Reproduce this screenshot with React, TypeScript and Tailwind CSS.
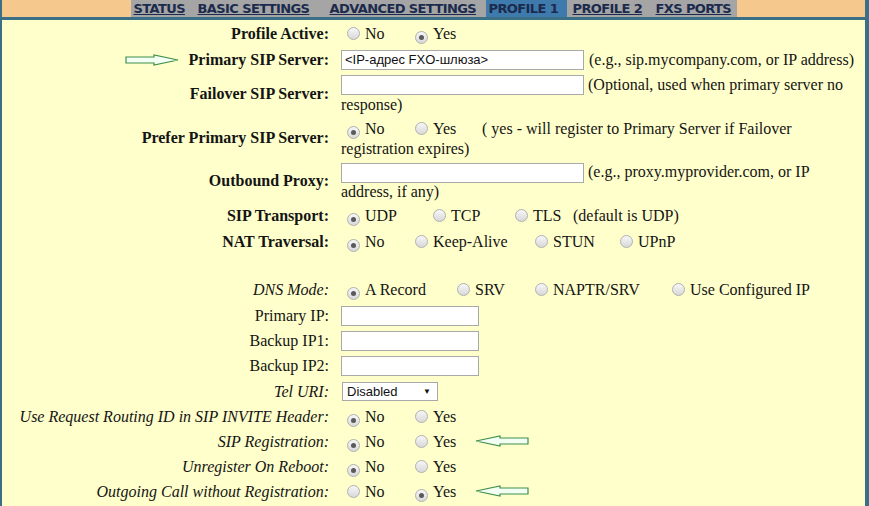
import React from 'react'

const tabs = [
  { label: 'STATUS', w: 'w-[61px] pl-[3px]' },
  { label: 'BASIC SETTINGS', w: 'w-[132px] pl-[6px]' },
  { label: 'ADVANCED SETTINGS', w: 'w-[162px] pl-[6px]' },
  { label: 'PROFILE 1', w: 'w-[81px] pl-[3px]', active: true },
  { label: 'PROFILE 2', w: 'w-[83px] pl-[6px]' },
  { label: 'FXS PORTS', w: 'w-[87px] pl-[6px]' },
]

function Radio({ on }: { on?: boolean }) {
  return (
    <span className="inline-flex items-center justify-center w-[13px] h-[13px] rounded-full border border-[#b0b0b0] bg-linear-to-b from-[#f7f7f7] to-[#d9d9d9] align-[-1px] mr-[5px]">
      {on && <span className="w-[5px] h-[5px] rounded-full bg-[#5a5a5a]" />}
    </span>
  )
}

function Option({ label, on, w }: { label: string; on?: boolean; w?: string }) {
  return (
    <span className={`inline-block whitespace-nowrap ${w ?? ''}`}>
      <Radio on={on} />
      {label}
    </span>
  )
}

function Arrow({ left }: { left?: boolean }) {
  return (
    <svg width="54" height="12" viewBox="0 0 54 12" className={left ? '' : 'rotate-180'}>
      <path
        d="M1 6 L25 1 L25 3 L53 3 L53 9 L25 9 L25 11 Z"
        fill="#f4fff4"
        stroke="#3f8f4a"
        strokeWidth="1.2"
        strokeLinejoin="miter"
      />
    </svg>
  )
}

function Field({ w, value }: { w: string; value?: string }) {
  return (
    <input
      readOnly
      defaultValue={value}
      className={`${w} h-[20px] align-top border border-[#a9a9a9] bg-white px-[3px] text-[13px] text-[#111] font-['Liberation_Sans',Arial,sans-serif] outline-none`}
    />
  )
}

function Row({
  label,
  style = 'bold',
  h = 'h-[25px]',
  children,
  extra,
}: {
  label: string
  style?: 'bold' | 'italic' | 'plain'
  h?: string
  children?: React.ReactNode
  extra?: React.ReactNode
}) {
  const cls = style === 'bold' ? 'font-bold' : style === 'italic' ? 'italic' : ''
  return (
    <div className={`flex ${h} relative`}>
      <div className={`w-[331px] shrink-0 flex items-center justify-end pr-[4px] pt-[1px] ${cls}`}>{label}</div>
      <div className="flex-1 flex items-center pl-[8px] pt-[1px] whitespace-nowrap">{children}</div>
      {extra}
    </div>
  )
}

function WrapRow({
  label,
  h,
  lead = 'leading-[20px]',
  children,
}: {
  label: string
  h: string
  lead?: string
  children: React.ReactNode
}) {
  return (
    <div className={`flex ${h}`}>
      <div className="w-[331px] shrink-0 flex items-center justify-end pr-[4px] font-bold">{label}</div>
      <div className={`flex-1 pl-[8px] pr-[4px] pt-[3px] ${lead}`}>{children}</div>
    </div>
  )
}

export default function App() {
  return (
    <div className="min-h-screen bg-[#ffffcc] border-l-2 border-r-4 border-[#3a6f86] font-['Liberation_Serif','Times_New_Roman',serif] text-[16px] text-[#141414]">
      <div className="h-[20px] bg-[#f5c98e] border-b-[3px] border-[#3a6f86] flex justify-center">
        <div className="flex h-[17px] bg-[#a5a5a5]">
          {tabs.map((t) => (
            <div
              key={t.label}
              className={`${t.w} h-full flex items-center font-['DejaVu_Sans',Verdana,sans-serif] font-bold text-[13px] tracking-[-0.6px] text-[#1b2a4d] ${t.active ? 'bg-[#3e7aab]' : 'underline underline-offset-1'}`}
            >
              {t.label}
            </div>
          ))}
        </div>
      </div>

      <Row label="Profile Active:" h="h-[26px]">
        <span className="ml-[6px]">
          <Option label="No" w="w-[68px]" />
          <Option label="Yes" on />
        </span>
      </Row>

      <Row
        label="Primary SIP Server:"
        h="h-[26px]"
        extra={
          <div className="absolute left-[123px] top-[8px]">
            <Arrow />
          </div>
        }
      >
        <Field w="w-[243px]" value="<IP-адрес FXO-шлюза>" />
        <span className="ml-[5px]">(e.g., sip.mycompany.com, or IP address)</span>
      </Row>

      <WrapRow label="Failover SIP Server:" h="h-[44px]">
        <Field w="w-[243px]" /> (Optional, used when primary server no response)
      </WrapRow>

      <WrapRow label="Prefer Primary SIP Server:" h="h-[44px]">
        <span className="ml-[6px]">
          <Option label="No" on w="w-[68px]" />
          <Option label="Yes" w="w-[67px]" />
        </span>
        ( yes - will register to Primary Server if Failover registration expires)
      </WrapRow>

      <WrapRow label="Outbound Proxy:" h="h-[42px]" lead="leading-[18px]">
        <Field w="w-[243px]" /> (e.g., proxy.myprovider.com, or IP address, if any)
      </WrapRow>

      <Row label="SIP Transport:" h="h-[26px]">
        <span className="ml-[6px]">
          <Option label="UDP" on w="w-[86px]" />
          <Option label="TCP" w="w-[82px]" />
          <Option label="TLS" w="w-[58px]" />
          (default is UDP)
        </span>
      </Row>

      <Row label="NAT Traversal:" h="h-[26px]">
        <span className="ml-[6px]">
          <Option label="No" on w="w-[68px]" />
          <Option label="Keep-Alive" w="w-[120px]" />
          <Option label="STUN" w="w-[85px]" />
          <Option label="UPnP" />
        </span>
      </Row>

      <div className="h-[22px]" />

      <Row label="DNS Mode:" style="italic" h="h-[26px]">
        <span className="ml-[6px]">
          <Option label="A Record" on w="w-[110px]" />
          <Option label="SRV" w="w-[78px]" />
          <Option label="NAPTR/SRV" w="w-[137px]" />
          <Option label="Use Configured IP" />
        </span>
      </Row>

      <Row label="Primary IP:" style="plain" h="h-[26px]">
        <Field w="w-[138px]" />
      </Row>
      <Row label="Backup IP1:" style="plain">
        <Field w="w-[138px]" />
      </Row>
      <Row label="Backup IP2:" style="plain">
        <Field w="w-[138px]" />
      </Row>

      <Row label="Tel URI:" style="italic" h="h-[26px]">
        <span className="ml-[1px] w-[96px] h-[19px] border border-[#a9a9a9] bg-white flex items-center justify-between pl-[4px] pr-[6px] font-['Liberation_Sans',Arial,sans-serif] text-[13px] text-[#111]">
          Disabled
          <span className="text-[8px]">▼</span>
        </span>
      </Row>

      <Row label="Use Request Routing ID in SIP INVITE Header:" style="italic">
        <span className="ml-[6px]">
          <Option label="No" on w="w-[68px]" />
          <Option label="Yes" />
        </span>
      </Row>

      <Row
        label="SIP Registration:"
        style="italic"
        extra={
          <div className="absolute left-[473px] top-[6px]">
            <Arrow left />
          </div>
        }
      >
        <span className="ml-[6px]">
          <Option label="No" on w="w-[68px]" />
          <Option label="Yes" />
        </span>
      </Row>

      <Row label="Unregister On Reboot:" style="italic">
        <span className="ml-[6px]">
          <Option label="No" on w="w-[68px]" />
          <Option label="Yes" />
        </span>
      </Row>

      <Row
        label="Outgoing Call without Registration:"
        style="italic"
        extra={
          <div className="absolute left-[473px] top-[6px]">
            <Arrow left />
          </div>
        }
      >
        <span className="ml-[6px]">
          <Option label="No" w="w-[68px]" />
          <Option label="Yes" on />
        </span>
      </Row>
    </div>
  )
}
